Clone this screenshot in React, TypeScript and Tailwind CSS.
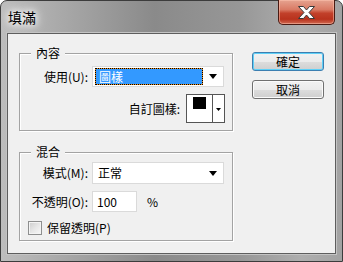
import React from 'react';

const ui = "font-['Noto_Sans_CJK_TC','Microsoft_JhengHei',sans-serif] text-[12px] leading-[16px] text-black";

const DownArrow: React.FC<{ small?: boolean }> = ({ small }) =>
  small ? (
    <svg width="5" height="3" viewBox="0 0 5 3">
      <path d="M0 0h5L2.5 3z" fill="#000" />
    </svg>
  ) : (
    <svg width="8" height="5" viewBox="0 0 8 5">
      <path d="M0 0h8L4 5z" fill="#000" />
    </svg>
  );

const GroupBox: React.FC<{ title: string; className: string; children: React.ReactNode }> = ({ title, className, children }) => (
  <div className={`relative w-[214px] border border-[#a3a3a3] shadow-[inset_1px_1px_0_#fff,1px_1px_0_#fff] ${className}`}>
    <span className="absolute left-[11px] -top-[9px] bg-[#f0f0f0] px-[5px]">{title}</span>
    {children}
  </div>
);

const App: React.FC = () => {
  return (
    <div className={`${ui} flex h-[262px] w-[343px] flex-col rounded-t-[7px] border border-[#3c3c3c] bg-[linear-gradient(90deg,#bdbdbd_0%,#a6a6a6_20%,#8a8a8a_45%,#979797_70%,#aeaeae_88%,#a2a2a2_100%)] px-[6px]`}>
      {/* Title bar */}
      <div className="flex h-[32px] items-start justify-between">
        <span className="ml-[1px] mt-[7px] text-[14px] leading-[18px] [text-shadow:0_0_6px_#fff,0_0_10px_#fff,0_0_14px_#fff]">填滿</span>
        <button className="-mt-px mr-px flex h-[25px] w-[57px] items-center justify-center rounded-b-[5px] border border-[#4a1a12] border-t-0 bg-[linear-gradient(180deg,#e6a390_0%,#d97a64_40%,#c2402a_55%,#b8321d_80%,#d06a52_100%)] shadow-[inset_0_0_0_1px_rgba(255,200,180,0.5)]">
          <svg width="17" height="13" viewBox="-0.5 -0.5 17 13">
            <path d="M0 0H5L8 3.5L11 0H16L10.5 6L16 12H11L8 8.5L5 12H0L5.5 6Z" fill="#fff" stroke="#3a3a3a" strokeWidth="1" strokeLinejoin="round" />
          </svg>
        </button>
      </div>

      {/* Client area */}
      <div className="flex h-[221px] border border-[#5e5e5e] bg-[#f0f0f0] shadow-[0_0_0_1px_#c4c4c4]">
        <div className="flex flex-col pl-[11px] pt-[19px]">
          <GroupBox title="內容" className="h-[78px]">
            <div className="flex flex-col pr-[7px] pt-[12px]">
              <div className="flex items-center">
                <span className="w-[68px] text-right">使用(U):</span>
                <div className="ml-[4px] flex h-[21px] w-[132px] items-center border border-[#dadada] bg-white pl-[2px]">
                  <span className="flex h-[17px] w-[108px] border border-dotted border-black bg-[#f0901c]">
                    <span className="flex flex-1 items-center bg-[#3399ff] pl-[3px] text-white">圖樣</span>
                  </span>
                  <span className="ml-auto mr-[6px] flex">
                    <DownArrow />
                  </span>
                </div>
              </div>
              <div className="mt-[7px] flex items-center justify-end">
                <span className="mr-[6px]">自訂圖樣:</span>
                <div className="flex h-[29px] w-[39px] border border-[#555] bg-white">
                  <div className="flex w-[25px] justify-center pt-[2px]">
                    <span className="h-[12px] w-[13px] bg-black" />
                  </div>
                  <div className="flex flex-1 items-center justify-center border-l border-[#555] pt-[1px]">
                    <DownArrow small />
                  </div>
                </div>
              </div>
            </div>
          </GroupBox>

          <GroupBox title="混合" className="mt-[21px] h-[89px]">
            <div className="flex flex-col pr-[7px] pt-[9px]">
              <div className="flex items-center">
                <span className="w-[68px] text-right">模式(M):</span>
                <div className="ml-[4px] flex h-[22px] w-[132px] items-center border border-[#dadada] bg-white pl-[5px]">
                  <span>正常</span>
                  <span className="ml-auto mr-[6px] flex">
                    <DownArrow />
                  </span>
                </div>
              </div>
              <div className="mt-[7px] flex items-center">
                <span className="w-[68px] text-right">不透明(O):</span>
                <div className="ml-[4px] flex h-[21px] w-[45px] items-center border border-[#dadada] bg-white pl-[4px]">100</div>
                <span className="ml-[10px]">%</span>
              </div>
              <label className="mt-[8px] flex items-center pl-[8px]">
                <span className="h-[14px] w-[14px] border border-[#8e8f8f] bg-[linear-gradient(135deg,#cdcdcd_0%,#e6e6e6_50%,#f8f8f8_100%)] shadow-[inset_0_0_0_1px_#f4f4f4]" />
                <span className="ml-[5px]">保留透明(P)</span>
              </label>
            </div>
          </GroupBox>
        </div>

        <div className="ml-[19px] flex flex-col gap-[9px] pt-[18px]">
          <button className="h-[19px] w-[72px] rounded-[3px] border border-[#3c7fb1] bg-[linear-gradient(180deg,#f2f2f2_0%,#ebebeb_50%,#dddddd_50%,#cfcfcf_100%)] leading-[16px] shadow-[inset_0_0_0_1px_#5fd0f7]">
            確定
          </button>
          <button className="h-[19px] w-[72px] rounded-[3px] border border-[#707070] bg-[linear-gradient(180deg,#f2f2f2_0%,#ebebeb_50%,#dddddd_50%,#cfcfcf_100%)] leading-[16px] shadow-[inset_0_0_0_1px_#fbfbfb]">
            取消
          </button>
        </div>
      </div>
    </div>
  );
};

export default App;
